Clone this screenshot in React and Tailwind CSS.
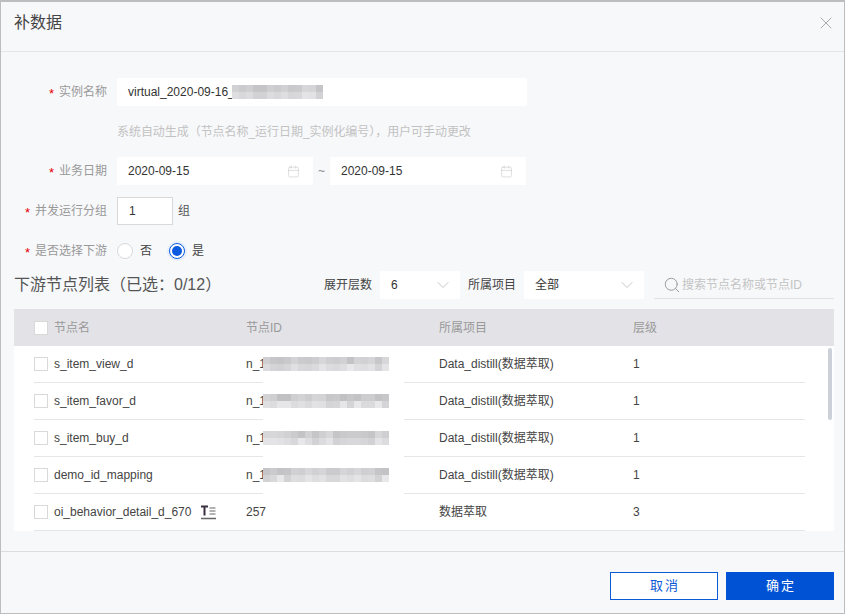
import React from "react";
import { X, Calendar, ChevronDown, Search } from "lucide-react";

const rows = [
  { name: "s_item_view_d", id: "n_1", project: "Data_distill(数据萃取)", level: 1, seed: 3 },
  { name: "s_item_favor_d", id: "n_1", project: "Data_distill(数据萃取)", level: 1, seed: 7 },
  { name: "s_item_buy_d", id: "n_1", project: "Data_distill(数据萃取)", level: 1, seed: 11 },
  { name: "demo_id_mapping", id: "n_1", project: "Data_distill(数据萃取)", level: 1, seed: 17 },
  { name: "oi_behavior_detail_d_670", id: "257", project: "数据萃取", level: 3, icon: true },
];

// 打码区域
function Mosaic({ cols, h, seed, cell = 7 }) {
  const cells = [];
  for (let y = 0; y < h; y++) {
    for (let x = 0; x < cols; x++) {
      const n = (x * 37 + y * 91 + seed * 13 + x * x * seed) % 24;
      const v = 192 + n + (y > 0 ? 18 : 0);
      cells.push(<rect key={x + "-" + y} x={x * cell} y={y * cell} width={cell} height={cell} fill={`rgb(${v},${v},${v + 2})`} />);
    }
  }
  return <svg width={cols * cell} height={h * cell} className="block relative shrink-0 -ml-[3px]">{cells}</svg>;
}

function Label({ children }) {
  return (
    <div className="w-[106px] shrink-0 flex justify-end items-center gap-[5px] text-[#999] text-xs">
      <span className="text-[#e60000] text-[13px] leading-3 translate-y-0.5">*</span>
      <span>{children}</span>
    </div>
  );
}

function DateBox() {
  return (
    <div className="w-[196px] h-7 bg-white flex items-center justify-between pl-[11px] pr-[13px] text-xs text-[#333]">
      <span>2020-09-15</span>
      <Calendar size={13} strokeWidth={1} className="text-[#c4c4c4]" />
    </div>
  );
}

function Select({ w, children }) {
  return (
    <div className={`${w} h-7 bg-white flex items-center justify-between pl-[11px] pr-[7px] text-xs text-[#333]`}>
      <span>{children}</span>
      <ChevronDown size={20} strokeWidth={0.8} className="text-[#aaa]" />
    </div>
  );
}

function Box() {
  return <div className="w-[14px] h-[14px] bg-white border border-[#d9d9d9] shrink-0" />;
}

function TreeIcon() {
  return (
    <svg width="16" height="15" viewBox="0 0 16 15" className="ml-[9px] shrink-0">
      <path d="M1 1.5h7M4.5 1.5v9" stroke="#3a3040" strokeWidth="2" fill="none" />
      <path d="M9.5 3h6M9.5 6h6M9.5 9h6" stroke="#666" strokeWidth="1" fill="none" />
      <path d="M1 13.5h15" stroke="#666" strokeWidth="1.5" fill="none" />
    </svg>
  );
}

export default function App() {
  return (
    <div className="w-[845px] h-[614px] flex flex-col bg-[#f7f8fa] border border-[#bdbdbd] border-t-2 overflow-hidden font-['Liberation_Sans','Noto_Sans_CJK_SC',sans-serif]">
      <div className="h-[50px] shrink-0 border-b border-[#e4e5e7] flex items-center justify-between pl-[13px] pr-2 pb-2">
        <span className="text-base text-[#444]">补数据</span>
        <X size={20} strokeWidth={1} className="text-[#999]" />
      </div>

      <div className="flex-1 flex flex-col min-h-0">
        <div className="flex items-center gap-[10px] mt-[26px] h-7">
          <Label>实例名称</Label>
          <div className="w-[410px] h-7 bg-white flex items-center pl-[11px] text-xs text-[#333]">
            <span>virtual_2020-09-16_</span>
            <Mosaic cols={13} h={2} seed={5} />
          </div>
        </div>
        <div className="ml-[116px] mt-[18px] h-[16px] leading-4 text-xs text-[#c2c2c2] tracking-[-0.05px]">系统自动生成（节点名称_运行日期_实例化编号），用户可手动更改</div>

        <div className="flex items-center gap-[10px] mt-[17px] h-7">
          <Label>业务日期</Label>
          <div className="flex items-center">
            <DateBox />
            <span className="w-[17px] text-center text-xs text-[#888]">~</span>
            <DateBox />
          </div>
        </div>

        <div className="flex items-center gap-[10px] mt-3 h-7">
          <Label>并发运行分组</Label>
          <div className="w-14 h-7 bg-white border border-[#d9d9d9] flex items-center pl-[11px] text-xs text-[#333]">1</div>
          <span className="text-xs text-[#555] -ml-[5px]">组</span>
        </div>

        <div className="flex items-center gap-[10px] mt-3 h-[28px]">
          <Label>是否选择下游</Label>
          <div className="flex items-center text-xs text-[#444]">
            <div className="w-4 h-4 rounded-full bg-white border border-[#d9d9d9]" />
            <span className="ml-[7px]">否</span>
            <div className="ml-[17px] w-4 h-4 rounded-full bg-white border border-[#0b5ae0] flex items-center justify-center ring-2 ring-[#e6eefc]">
              <div className="w-2.5 h-2.5 rounded-full bg-[#0b5ae0]" />
            </div>
            <span className="ml-[7px]">是</span>
          </div>
        </div>

        <div className="flex items-center mt-[6px] h-7 pl-[13px] pr-[10px]">
          <span className="text-base text-[#555]">下游节点列表（已选：0/12）</span>
          <div className="ml-auto flex items-center gap-2 text-xs text-[#444]">
            <span>展开层数</span>
            <Select w="w-20">6</Select>
            <span>所属项目</span>
            <Select w="w-[120px]">全部</Select>
            <div className="ml-[2px] w-[180px] h-7 border-b border-[#e0e1e4] flex items-center pl-[9px] gap-[1px] text-[#c4c4c4]">
              <Search size={18} strokeWidth={1.3} className="text-[#999]" />
              <span>搜索节点名称或节点ID</span>
            </div>
          </div>
        </div>

        <div className="mx-[13px] mt-[10px] w-[820px] text-xs">
          <div className="h-[37px] bg-[#e3e3e7] flex items-center pl-5 text-[#999]">
            <Box />
            <span className="ml-[6px] w-[192px]">节点名</span>
            <span className="w-[193px]">节点ID</span>
            <span className="w-[194px]">所属项目</span>
            <span>层级</span>
          </div>
          <div className="relative bg-white">
            {rows.map((r) => (
              <div key={r.name} className="relative ml-5 mr-[29px] h-[37px] flex items-center border-b border-[#e5e6e8] text-[#444]">
                <Box />
                <div className="ml-[6px] w-[192px] flex items-center">
                  <span>{r.name}</span>
                  {r.icon && <TreeIcon />}
                </div>
                <div className="w-[193px] flex items-center">
                  <span>{r.id}</span>
                  {r.seed && <Mosaic cols={18} h={2} seed={r.seed} />}
                </div>
                <span className="w-[194px]">{r.project}</span>
                <span>{r.level}</span>
                {r.seed && <div className="absolute left-[229px] -bottom-px w-[141px] h-px bg-white" />}
              </div>
            ))}
            <div className="absolute top-[2px] right-[2px] w-[4px] h-[72px] rounded-sm bg-[#ccd0d9]" />
          </div>
        </div>
      </div>

      <div className="h-[62px] shrink-0 border-t border-[#dcdde0] flex justify-end items-start gap-2 pt-5 pr-[10px]">
        <button className="w-[108px] h-7 pl-[2px] bg-white border border-[#0b5ad6] text-[#0b5ad6] text-[13px] tracking-[2px]">取消</button>
        <button className="w-[108px] h-7 pl-[2px] bg-[#0052d4] text-white text-[13px] tracking-[2px]">确定</button>
      </div>
    </div>
  );
}
